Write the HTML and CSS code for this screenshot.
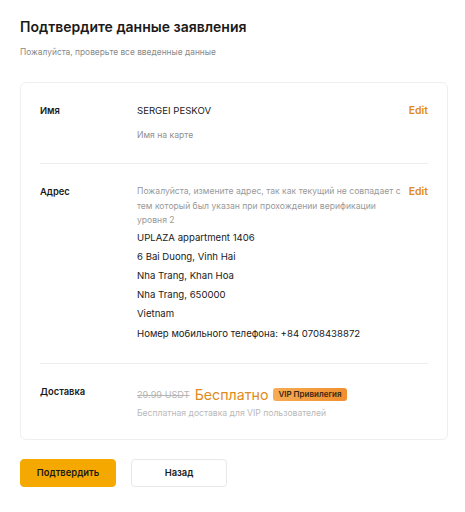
FILE: index.html
```html
<!DOCTYPE html>
<html lang="ru">
  <head>
    <meta charset="UTF-8" />
    <meta name="viewport" content="width=device-width, initial-scale=1" />
    <title>Подтвердите данные заявления</title>
    <link rel="stylesheet" href="styles.css">
  </head>
  <body>
    <main class="page">
      <h1 class="title">Подтвердите данные заявления</h1>
      <p class="subtitle">Пожалуйста, проверьте все введенные данные</p>

      <section class="card">
        <div class="row">
          <div class="label">Имя</div>
          <div class="value">
            <p class="main">SERGEI PESKOV</p>
            <p class="hint">Имя на карте</p>
          </div>
          <a class="edit" href="#">Edit</a>
        </div>

        <div class="row">
          <div class="label">Адрес</div>
          <div class="value">
            <p class="note">Пожалуйста, измените адрес, так как текущий не совпадает с тем который был указан при прохождении верификации уровня 2</p>
            <ul class="address">
              <li>UPLAZA appartment 1406</li>
              <li>6 Bai Duong, Vinh Hai</li>
              <li>Nha Trang, Khan Hoa</li>
              <li>Nha Trang, 650000</li>
              <li>Vietnam</li>
              <li>Номер мобильного телефона: +84 0708438872</li>
            </ul>
          </div>
          <a class="edit" href="#">Edit</a>
        </div>

        <div class="row">
          <div class="label">Доставка</div>
          <div class="value">
            <div class="price">
              <span class="old">29.99 USDT</span>
              <span class="free">Бесплатно</span>
              <span class="badge">VIP Привилегия</span>
            </div>
            <p class="hint light">Бесплатная доставка для VIP пользователей</p>
          </div>
        </div>
      </section>

      <div class="actions">
        <button class="btn primary">Подтвердить</button>
        <button class="btn">Назад</button>
      </div>
    </main>
  </body>
</html>
```

FILE: styles.css
```css
body {
  font-family: Inter, "Noto Sans", Arial, sans-serif;
  margin: 0;
  padding: 0;
  background-color: #ffffff;
  color: #1a1a1a;
}

.page {
  padding: 15px 17px 20px 20px;
  min-height: 477px;
  border-left: 3px solid #f7f8fa;
  margin-left: -3px;
}

.title {
  font-size: 14px;
  font-weight: 600;
  margin: 0;
  line-height: 24px;
}

.subtitle {
  font-size: 8.4px;
  color: #8a8a8a;
  margin: 6px 0 0;
  line-height: 14px;
}

.card {
  margin-top: 23px;
  border: 1px solid #efefef;
  border-radius: 6px;
  padding: 0 19px;
}

.row {
  display: flex;
  align-items: flex-start;
  padding: 20px 0;
  border-bottom: 1px solid #eeeeee;
}

.row:last-child {
  border-bottom: none;
  padding-bottom: 19px;
}

.label {
  width: 97px;
  flex-shrink: 0;
  font-size: 9.4px;
  font-weight: 600;
  line-height: 16px;
}

.value {
  flex: 1;
}

.value p {
  margin: 0;
}

.main {
  font-size: 9.6px;
  line-height: 16px;
}

.hint {
  font-size: 8.6px;
  color: #8f8f8f;
  line-height: 16px;
  margin-top: 8px !important;
}

.hint.light {
  color: #b9b9b9;
  margin-top: 0 !important;
  line-height: 14px;
}

.note {
  font-size: 8.6px;
  color: #999999;
  line-height: 14.5px;
  padding-right: 6px;
}

.address {
  list-style-type: none;
  margin: 0;
  padding: 0;
}

.address li {
  font-size: 9.6px;
  line-height: 19.2px;
}

.edit {
  color: #e08b1d;
  font-size: 10.5px;
  font-weight: 600;
  text-decoration: none;
  line-height: 16px;
}

.price {
  display: flex;
  align-items: center;
  gap: 5px;
  height: 22px;
}

.old {
  font-size: 9.2px;
  color: #b5b5b5;
  text-decoration: line-through;
}

.free {
  font-size: 14.2px;
  color: #e08b1d;
}

.badge {
  font-size: 8px;
  font-weight: 600;
  color: #3a2614;
  padding: 1px 5px;
  border-radius: 3px;
  background: linear-gradient(90deg, #f7ac55, #f08f2e);
  line-height: 11px;
}

.actions {
  display: flex;
  gap: 15px;
  margin-top: 19px;
}

.btn {
  width: 96px;
  height: 28px;
  border: 1px solid #e8e8e8;
  border-radius: 4px;
  background-color: #ffffff;
  font-family: inherit;
  font-size: 9.4px;
  font-weight: 600;
  color: #1a1a1a;
  cursor: pointer;
}

.btn.primary {
  background-color: #f5a800;
  border-color: #f5a800;
}
```
